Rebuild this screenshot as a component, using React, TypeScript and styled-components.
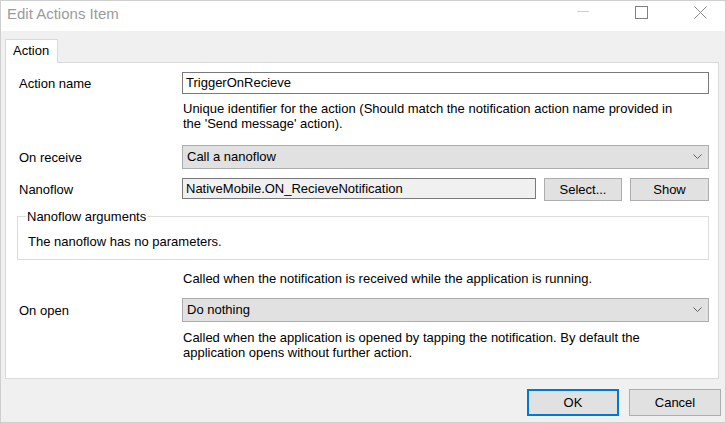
import React from "react";
import styled, { createGlobalStyle } from "styled-components";

const Global = createGlobalStyle`
  html, body { margin: 0; padding: 0; background: #ffffff; }
  * { box-sizing: border-box; }
`;

const FONT = `"Liberation Sans", Arial, sans-serif`;

const Window = styled.div`
  width: 726px;
  height: 423px;
  border: 1px solid #cfcfcf;
  display: flex;
  flex-direction: column;
  font-family: ${FONT};
  font-size: 13px;
  color: #000;
`;

const TitleBar = styled.div`
  height: 30px;
  background: #ffffff;
  display: flex;
  align-items: flex-start;
  padding: 5px 18px 0 6px;
`;

const Title = styled.div`
  flex: 1;
  font-size: 15px;
  line-height: 16px;
  color: #9b9b9b;
`;

const CaptionButton = styled.div<{ $gap: number }>`
  display: flex;
  margin-left: ${(p) => p.$gap}px;
  svg { display: block; }
`;

const Body = styled.div`
  flex: 1;
  background: #f0f0f0;
  display: flex;
  flex-direction: column;
  padding: 8px 4px 6px 4px;
`;

const TabStrip = styled.div`
  display: flex;
  position: relative;
  z-index: 1;
`;

const Tab = styled.div`
  width: 53px;
  height: 24px;
  background: #ffffff;
  border: 1px solid #d9d9d9;
  border-bottom: none;
  margin-bottom: -1px;
  padding: 3px 0 0 7px;
`;

const Panel = styled.div`
  height: 317px;
  margin-right: 2px;
  background: #ffffff;
  border: 1px solid #d9d9d9;
  padding: 9px 9px 0 11px;
  display: flex;
  flex-direction: column;
`;

const Row = styled.div<{ $top: number }>`
  display: grid;
  grid-template-columns: 165px 1fr;
  align-items: center;
  margin-top: ${(p) => p.$top}px;
`;

const Label = styled.div`
  padding-left: 2px;
`;

const TextInput = styled.div<{ $readonly?: boolean; $h: number }>`
  height: ${(p) => p.$h}px;
  border: 1px solid #7a7a7a;
  background: ${(p) => (p.$readonly ? "#f0f0f0" : "#ffffff")};
  display: flex;
  align-items: center;
  padding-left: 3px;
  padding-bottom: 1px;
`;

const Help = styled.div`
  grid-column: 2;
  line-height: 15px;
  padding-left: 1px;
  padding-right: 20px;
`;

const Select = styled.div`
  height: 24px;
  border: 1px solid #adadad;
  background: #e1e1e1;
  display: flex;
  align-items: center;
  padding: 0 6px 1px 4px;
`;

const SelectText = styled.span`
  flex: 1;
`;

const NanoflowLine = styled.div`
  display: flex;
  align-items: flex-start;
  gap: 8px;
`;

const Grow = styled.div`
  flex: 1;
`;

const Button = styled.div<{ $w: number; $h: number; $default?: boolean }>`
  width: ${(p) => p.$w}px;
  height: ${(p) => p.$h}px;
  background: #e1e1e1;
  border: ${(p) => (p.$default ? "2px solid #0078d7" : "1px solid #adadad")};
  display: flex;
  align-items: center;
  justify-content: center;
  padding-bottom: 1px;
`;

const Group = styled.div`
  margin-top: 15px;
  border: 1px solid #dcdcdc;
  padding: 0 8px 10px 8px;
  display: flex;
  flex-direction: column;
  align-items: flex-start;
`;

const GroupTitle = styled.div`
  margin-top: -8px;
  padding: 0 1px;
  line-height: 15px;
  background: #ffffff;
`;

const GroupText = styled.div`
  margin-top: 10px;
  padding-left: 2px;
  line-height: 15px;
`;

const Footer = styled.div`
  display: flex;
  justify-content: flex-end;
  gap: 10px;
  margin-top: 10px;
`;

const Chevron = () => (
  <svg width="9" height="5" viewBox="0 0 9 5">
    <path d="M0.5 0.5 L4.5 4.5 L8.5 0.5" fill="none" stroke="#606060" strokeWidth="1" />
  </svg>
);

export default function App() {
  return (
    <>
      <Global />
      <Window>
        <TitleBar>
          <Title>Edit Actions Item</Title>
          <CaptionButton $gap={0}>
            <svg width="12" height="13" viewBox="0 0 12 13">
              <line x1="0" y1="5.5" x2="12" y2="5.5" stroke="#cfcfcf" strokeWidth="1" />
            </svg>
          </CaptionButton>
          <CaptionButton $gap={46}>
            <svg width="13" height="13" viewBox="0 0 13 13">
              <rect x="0.5" y="0.5" width="12" height="12" fill="none" stroke="#808080" strokeWidth="1" />
            </svg>
          </CaptionButton>
          <CaptionButton $gap={46}>
            <svg width="13" height="13" viewBox="0 0 13 13">
              <path d="M0.5 0.5 L12.5 12.5 M12.5 0.5 L0.5 12.5" stroke="#8a8a8a" strokeWidth="1" />
            </svg>
          </CaptionButton>
        </TitleBar>
        <Body>
          <TabStrip>
            <Tab>Action</Tab>
          </TabStrip>
          <Panel>
            <Row $top={0}>
              <Label>Action name</Label>
              <TextInput $h={22}>TriggerOnRecieve</TextInput>
            </Row>
            <Row $top={7}>
              <Help>
                Unique identifier for the action (Should match the notification action name provided in
                the 'Send message' action).
              </Help>
            </Row>
            <Row $top={14}>
              <Label>On receive</Label>
              <Select>
                <SelectText>Call a nanoflow</SelectText>
                <Chevron />
              </Select>
            </Row>
            <Row $top={9}>
              <Label>Nanoflow</Label>
              <NanoflowLine>
                <Grow>
                  <TextInput $h={21} $readonly>NativeMobile.ON_RecieveNotification</TextInput>
                </Grow>
                <Button $w={78} $h={23}>Select...</Button>
                <Button $w={79} $h={23}>Show</Button>
              </NanoflowLine>
            </Row>
            <Group>
              <GroupTitle>Nanoflow arguments</GroupTitle>
              <GroupText>The nanoflow has no parameters.</GroupText>
            </Group>
            <Row $top={11}>
              <Help>Called when the notification is received while the application is running.</Help>
            </Row>
            <Row $top={12}>
              <Label>On open</Label>
              <Select>
                <SelectText>Do nothing</SelectText>
                <Chevron />
              </Select>
            </Row>
            <Row $top={8}>
              <Help>
                Called when the application is opened by tapping the notification. By default the
                application opens without further action.
              </Help>
            </Row>
          </Panel>
          <Footer>
            <Button $w={92} $h={27} $default>OK</Button>
            <Button $w={92} $h={27}>Cancel</Button>
          </Footer>
        </Body>
      </Window>
    </>
  );
}
